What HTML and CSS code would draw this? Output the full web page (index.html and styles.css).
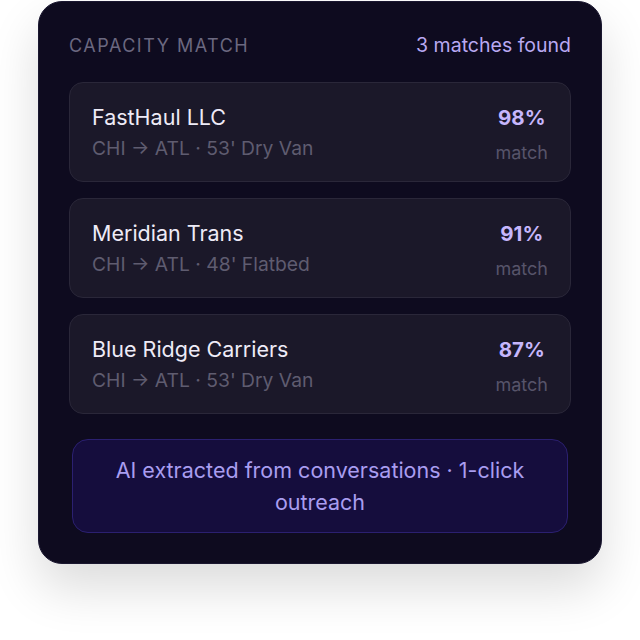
FILE: index.html
```html
<!DOCTYPE html>
<html lang="en">

<head>
    <meta charset="UTF-8">
    <meta name="viewport" content="width=device-width, initial-scale=1.0">
    <title>Capacity Match</title>
    <link rel="stylesheet" href="styles.css">
</head>

<body>
<div class="page">
    <div class="panel">
        <div class="panel-head">
            <span class="panel-title">Capacity Match</span>
            <span class="panel-count">3 matches found</span>
        </div>

        <div class="match-list">
            <div class="match-row">
                <div class="carrier">
                    <div class="carrier-name">FastHaul LLC</div>
                    <div class="carrier-lane">CHI → ATL · 53' Dry Van</div>
                </div>
                <div class="score">
                    <div class="score-value">98%</div>
                    <div class="score-label">match</div>
                </div>
            </div>

            <div class="match-row">
                <div class="carrier">
                    <div class="carrier-name">Meridian Trans</div>
                    <div class="carrier-lane">CHI → ATL · 48' Flatbed</div>
                </div>
                <div class="score">
                    <div class="score-value">91%</div>
                    <div class="score-label">match</div>
                </div>
            </div>

            <div class="match-row">
                <div class="carrier">
                    <div class="carrier-name">Blue Ridge Carriers</div>
                    <div class="carrier-lane">CHI → ATL · 53' Dry Van</div>
                </div>
                <div class="score">
                    <div class="score-value">87%</div>
                    <div class="score-label">match</div>
                </div>
            </div>
        </div>

        <div class="ai-note">AI extracted from conversations · 1-click outreach</div>
    </div>
</div>
</body>

</html>
```

FILE: styles.css
```css
body {
    font-family: Inter, "Noto Sans", sans-serif;
    background-color: #ffffff;
    margin: 0;
    padding: 0;
}

.page {
    display: flex;
    justify-content: center;
    align-items: flex-start;
    min-height: 100vh;
    padding-top: 1px;
    box-sizing: border-box;
}

.panel {
    width: 564px;
    box-sizing: border-box;
    background-color: #0e0b1f;
    border: 1px solid #1a1730;
    border-radius: 24px;
    padding: 30px;
    box-shadow: 0 24px 50px rgba(0, 0, 0, 0.14);
}

.panel-head {
    display: flex;
    justify-content: space-between;
    align-items: center;
    height: 26px;
    margin-bottom: 24px;
}

.panel-title {
    font-size: 18px;
    letter-spacing: 1.5px;
    text-transform: uppercase;
    color: #6b6880;
}

.panel-count {
    font-size: 19.5px;
    color: #b9a9f2;
}

.match-list {
    display: flex;
    flex-direction: column;
    gap: 16px;
}

.match-row {
    display: flex;
    justify-content: space-between;
    align-items: center;
    height: 100px;
    box-sizing: border-box;
    padding: 0 22px;
    background-color: #1b1829;
    border: 1px solid #2a2739;
    border-radius: 14px;
}

.carrier-name {
    font-size: 21.5px;
    line-height: 26px;
    color: #eeebf7;
}

.carrier-lane {
    font-size: 19.3px;
    line-height: 26px;
    margin-top: 5px;
    color: #5f5c70;
}

.score {
    text-align: center;
    padding-top: 6px;
}

.score-value {
    font-size: 20.5px;
    line-height: 24px;
    font-weight: 700;
    color: #c6b6fc;
}

.score-label {
    font-size: 18px;
    line-height: 22px;
    margin-top: 12px;
    color: #57546a;
}

.ai-note {
    margin: 25px 3px 0;
    padding: 14px 20px;
    background-color: #150d3d;
    border: 1px solid #2b2070;
    border-radius: 16px;
    text-align: center;
    font-size: 21.5px;
    line-height: 32px;
    color: #a99df0;
}
```
